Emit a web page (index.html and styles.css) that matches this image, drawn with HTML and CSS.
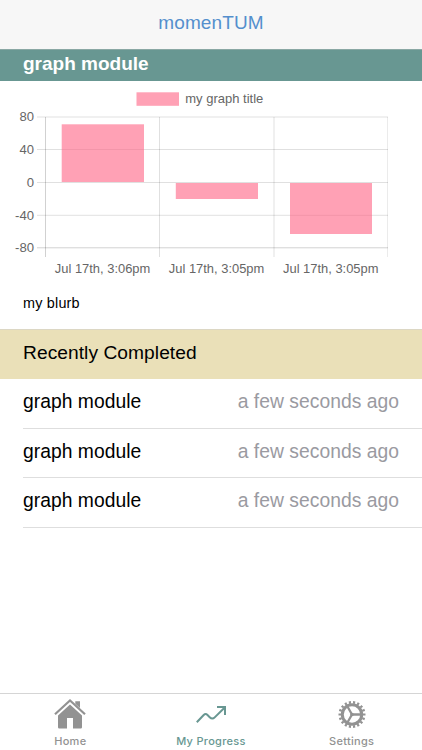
FILE: index.html
```html
<!doctype html>
<html>
<head>
<meta charset="utf-8">
<title>momenTUM</title>
  <link rel="stylesheet" href="styles.css">
</head>
<body>
  <header class="navbar">momenTUM</header>
  <main class="content">
    <h1 class="module-title"><span>graph module</span></h1>
    <svg class="chart" viewBox="0 81 422 206">
      <!-- legend -->
      <rect class="bar" x="136.5" y="92.3" width="42.5" height="13.5"/>
      <text x="185.3" y="103.3" textLength="78" lengthAdjust="spacingAndGlyphs">my graph title</text>
      <!-- grid -->
      <g class="grid">
        <path d="M37 117h351M37 149.5h351M37 182.5h351M37 215.3h351"/>
        <path class="strong" d="M37 247.8h351"/>
        <path class="strong" d="M45.5 117v140"/>
        <path d="M159.5 117v140M274 117v140"/>
        <path class="weak" d="M387.5 117v140"/>
      </g>
      <!-- bars -->
      <rect class="bar" x="61.7" y="124.3" width="82.3" height="57.7"/>
      <rect class="bar" x="175.8" y="183" width="82.2" height="16"/>
      <rect class="bar" x="290" y="183" width="82" height="51"/>
      <g class="y-labels">
        <text x="34" y="121" textLength="14.500" lengthAdjust="spacingAndGlyphs">80</text>
        <text x="34" y="154" textLength="14.500" lengthAdjust="spacingAndGlyphs">40</text>
        <text x="34" y="187" textLength="7.300" lengthAdjust="spacingAndGlyphs">0</text>
        <text x="34" y="219.500" textLength="19" lengthAdjust="spacingAndGlyphs">-40</text>
        <text x="34" y="252" textLength="19" lengthAdjust="spacingAndGlyphs">-80</text>
      </g>
      <text x="54.8" y="273" textLength="95.5" lengthAdjust="spacingAndGlyphs">Jul 17th, 3:06pm</text>
      <text x="168.8" y="273" textLength="95.5" lengthAdjust="spacingAndGlyphs">Jul 17th, 3:05pm</text>
      <text x="283" y="273" textLength="95.5" lengthAdjust="spacingAndGlyphs">Jul 17th, 3:05pm</text>
    </svg>
    <p class="blurb">my blurb</p>
    <h2 class="list-header"><span>Recently Completed</span></h2>
    <ul class="history">
      <li><span class="name">graph module</span><span class="time">a few seconds ago</span></li>
      <li><span class="name">graph module</span><span class="time">a few seconds ago</span></li>
      <li><span class="name">graph module</span><span class="time">a few seconds ago</span></li>
    </ul>
  </main>
  <nav class="tabs">
    <a class="tab" href="#">
      <svg class="icon" viewBox="0 0 34 34">
        <path class="roof" d="M2 17.2L17 3.5l15 13.7"/>
        <path class="solid" d="M22.3 4.3H27V11l-4.7-4.2zM17 7.5l12 11V30.2q0 1.3-1.3 1.3H20V21h-6v10.500H6.300Q5 31.500 5 30.200V18.500z"/>
      </svg>
      <span>Home</span>
    </a>
    <a class="tab active" href="#">
      <svg class="icon" viewBox="0 0 34 34">
        <path class="line" d="M2.800 25.300L9.700 18q1.900-1.900 3.800 0l2.200 2.200q2.600 2.600 5 .2L31 10.300M23 10h8v8"/>
      </svg>
      <span>My Progress</span>
    </a>
    <a class="tab" href="#">
      <svg class="icon" viewBox="0 0 34 34">
        <circle class="ring" cx="17" cy="17.500" r="9.700"/>
        <circle class="teeth" cx="17" cy="17.500" r="12.200" pathLength="180"/>
        <path class="spokes" d="M17 17.500h10M17 17.500l-5-8.700M17 17.500l-5 8.700"/>
        <circle class="solid" cx="17" cy="17.500" r="1.800"/>
      </svg>
      <span>Settings</span>
    </a>
  </nav>
</body>
</html>
```

FILE: styles.css
```css
* {
  box-sizing: border-box;
}
body {
  display: flex;
  flex-direction: column;
  height: 100vh;
  margin: 0;
  overflow: hidden;
  background: #fff;
  color: #000;
  font-family: 'Liberation Sans', Arial, sans-serif;
}
.navbar {
  height: 49px;
  line-height: 46px;
  text-align: center;
  font-size: 19px;
  letter-spacing: .1px;
  color: #548fcd;
  background: #f7f7f7;
}
.content {
  flex: 1;
}
.module-title {
  height: 32px;
  margin: 0;
  padding-left: 23px;
  border-top: 1px solid #8aa8a4;
  line-height: 27px;
  font-size: 19px;
  color: #fff;
  background: #689792;
}
.chart {
  display: block;
  width: 422px;
  height: 206px;
  font-size: 13.6px;
  fill: #666;
}
.bar {
  fill: #ff6384;
  fill-opacity: .6;
}
.grid path {
  stroke: #000;
  stroke-opacity: .12;
}
.grid .strong {
  stroke-opacity: .18;
}
.grid .weak {
  stroke-opacity: .08;
}
.y-labels {
  text-anchor: end;
}
.blurb {
  height: 42px;
  margin: 0;
  padding-left: 23px;
  line-height: 33px;
  font-size: 14.4px;
  letter-spacing: .2px;
}
.list-header {
  height: 50px;
  margin: 0;
  padding-left: 23px;
  border-top: 1px solid #dcd7c4;
  line-height: 46px;
  font-size: 19.2px;
  letter-spacing: .05px;
  font-weight: normal;
  background: #eae0b8;
}
.history {
  margin: 0;
  padding: 0 0 0 23px;
  list-style-type: none;
}
.history li {
  display: flex;
  justify-content: space-between;
  height: 49.5px;
  padding-right: 23px;
  border-bottom: 1px solid #dedede;
  line-height: 46px;
  font-size: 19.3px;
  letter-spacing: .03px;
}
.history .time {
  color: #9a9aa1;
}
.tabs {
  display: flex;
  height: 57px;
  border-top: 1px solid #d5d5d5;
  background: #fff;
}
.tab {
  display: flex;
  flex: 1;
  flex-direction: column;
  align-items: center;
  padding-top: 3px;
  font-size: 11px;
  line-height: 14px;
  letter-spacing: .3px;
  text-decoration: none;
  color: #929292;
  font-family: Inter, sans-serif;
  font-weight: 500;
}
.tab.active {
  color: #689792;
}
.icon {
  width: 34px;
  height: 34px;
  margin-bottom: 3px;
  fill: none;
}
.solid {
  fill: currentColor;
}
.roof {
  stroke: currentColor;
  stroke-width: 2.2;
}
.line {
  stroke: currentColor;
  stroke-width: 2;
}
.ring {
  stroke: currentColor;
  stroke-width: 3;
}
.teeth {
  stroke: currentColor;
  stroke-width: 2.6;
  stroke-dasharray: 5 5;
  stroke-dashoffset: 2.5;
}
.spokes {
  stroke: currentColor;
  stroke-width: 2.3;
}
```
